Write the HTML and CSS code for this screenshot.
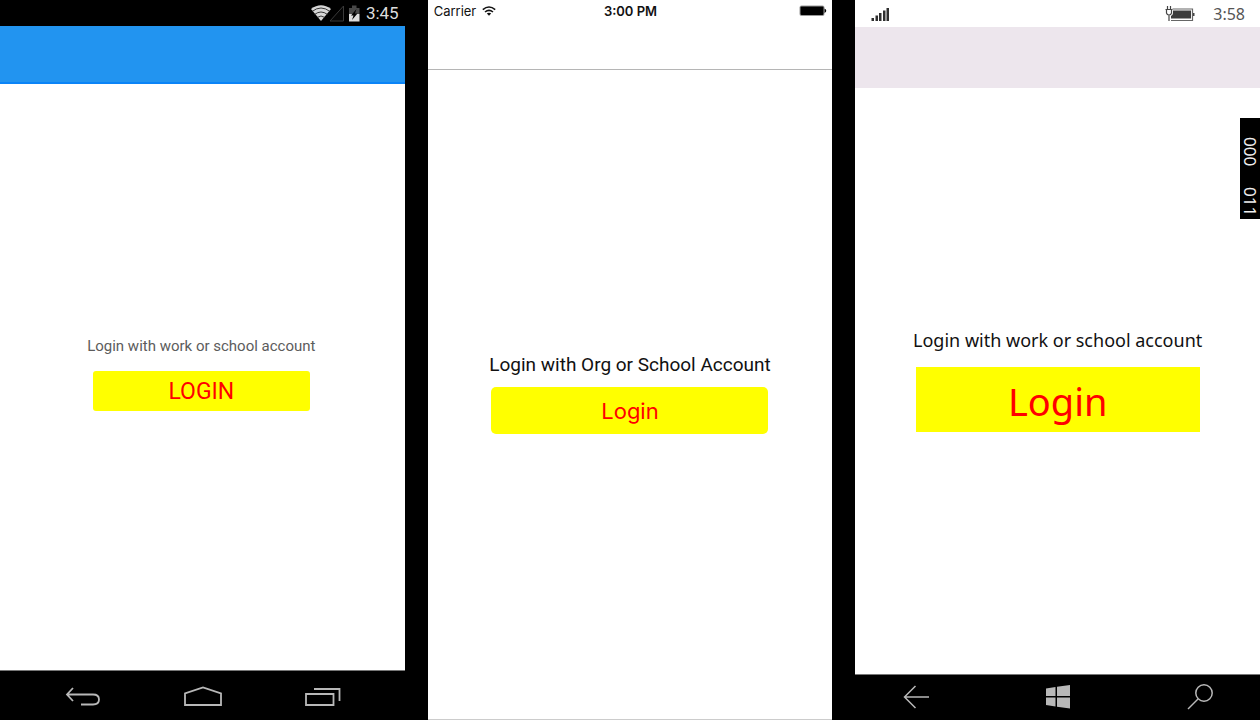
FILE: index.html
```html
<!DOCTYPE html>
<html lang="en">
<head>
<meta charset="utf-8">
<meta name="viewport" content="width=device-width, initial-scale=1">
<title>Login on three platforms</title>
<link rel="stylesheet" href="styles.css">
</head>
<body>
<main class="devices">
  <section class="device android" aria-label="Android">
    <div class="status">
      <svg class="status-icons" width="52" height="20" viewBox="0 0 52 20" aria-hidden="true">
        <path d="M1 6Q11-1.500 21 6L11 18Z" fill="#d6d6d6"/>
        <path d="M2 8.500Q11 1.500 20 8.500M4.500 11.500Q11 6.500 17.500 11.500M7 14.500Q11 11.500 15 14.500" fill="none" stroke="#222" stroke-width=".9"/>
        <path d="M20 18H33.500V3Z" fill="#050505" stroke="#3a3a3a"/>
        <path d="M39 5H42V2.500H46.500V5H49.500V11H39Z" fill="#484848"/>
        <path d="M39 11H49.500V18.500H39Z" fill="#dcdcdc"/>
        <path d="M46.500 6L41 12.500H43.500L42 17L47.500 10.500H45Z" fill="#000"/>
      </svg>
      <time>3:45</time>
    </div>
    <header class="bar"></header>
    <div class="content">
      <div class="login">
        <p class="label" id="android-label">Login with work or school account</p>
        <button class="button" type="button" aria-describedby="android-label">LOGIN</button>
      </div>
    </div>
    <nav class="nav" aria-label="Android navigation">
      <button class="nav-button" type="button" aria-label="Back">
        <svg width="36" height="22" viewBox="0 0 36 22"><path d="M8 2L2 8.500L8 15M2 8.500H28C32 8.500 34 10.500 34 13.500S32 18.500 28 18.500H16" fill="none" stroke="#b8b8b8" stroke-width="1.800"/></svg>
      </button>
      <button class="nav-button" type="button" aria-label="Home">
        <svg width="38" height="22" viewBox="0 0 38 22"><path d="M1 19V7.500L19 1.500L37 7.500V19Z" fill="none" stroke="#b8b8b8" stroke-width="1.800"/></svg>
      </button>
      <button class="nav-button" type="button" aria-label="Recent apps">
        <svg width="36" height="22" viewBox="0 0 36 22"><path d="M1 8H28.500V19H1ZM9 3H34.500V15" fill="none" stroke="#b8b8b8" stroke-width="1.800"/></svg>
      </button>
    </nav>
  </section>

  <section class="device ios" aria-label="iOS">
    <div class="status">
      <span class="carrier">Carrier
        <svg width="14" height="10" viewBox="0 0 14 10" aria-hidden="true"><path d="M.8 3.600Q7-1.600 13.200 3.600M3 6Q7 2.800 11 6" fill="none" stroke="#111" stroke-width="1.600"/><path d="M4.800 7.500Q7 5.800 9.200 7.500L7 9.800Z" fill="#111"/></svg>
      </span>
      <time>3:00 PM</time>
      <svg class="battery" width="28" height="12" viewBox="0 0 28 12" aria-hidden="true"><rect x=".5" y=".5" width="25" height="10.500" rx="2" fill="#999"/><rect x="1.500" y="1.500" width="23" height="8.500" rx="1" fill="#000"/><path d="M25.500 3.500Q29 5.700 25.500 8Z" fill="#000"/></svg>
    </div>
    <header class="bar"></header>
    <div class="content">
      <div class="login">
        <p class="label" id="ios-label">Login with Org or School Account</p>
        <button class="button" type="button" aria-describedby="ios-label">Login</button>
      </div>
    </div>
  </section>

  <section class="device windows" aria-label="Windows">
    <div class="status">
      <svg class="signal" width="20" height="16" viewBox="0 0 20 16" aria-hidden="true"><path d="M1.500 12H4V15H1.500ZM5.500 9.500H8V15H5.500ZM9 7H11.500V15H9ZM13 4.500H15.500V15H13ZM16.500 2H19V15H16.500Z" fill="#2f2f2f"/></svg>
      <svg class="battery" width="30" height="18" viewBox="0 0 30 18" aria-hidden="true"><path d="M7.500 4H27.500V15.500H6" fill="none" stroke="#666" stroke-width="1.200"/><path d="M8 5.500H26V13.500H6V11Q8 10 8 8Z" fill="#3d3d3d"/><path d="M28 8H29.500V11H28Z" fill="#444"/><path d="M2.500 1V4M5.500 1V4M.5 4.500H7.500M1.500 5V8Q2 10 4 10T6.500 8V5M4 10V16" fill="none" stroke="#444" stroke-width="1.200"/></svg>
      <time>3:58</time>
    </div>
    <header class="bar"></header>
    <div class="content">
      <div class="login">
        <p class="label" id="windows-label">Login with work or school account</p>
        <button class="button" type="button" aria-describedby="windows-label">Login</button>
      </div>
    </div>
    <nav class="nav" aria-label="Windows navigation">
      <button class="nav-button" type="button" aria-label="Back">
        <svg width="26" height="26" viewBox="0 0 26 26"><path d="M12.500 2L1.500 13L12.500 24M1.500 13H26" fill="none" stroke="#b8b8b8" stroke-width="1.500"/></svg>
      </button>
      <button class="nav-button" type="button" aria-label="Start">
        <svg width="26" height="26" viewBox="0 0 26 26"><path d="M1 4.500L10.500 3V12H1ZM12 2.800L25 1V12H12ZM1 13.500H10.500V22.500L1 21ZM12 13.500H25V24.500L12 22.700Z" fill="#b8b8b8"/></svg>
      </button>
      <button class="nav-button" type="button" aria-label="Search">
        <svg width="26" height="26" viewBox="0 0 26 26"><circle cx="17" cy="9" r="8.200" fill="none" stroke="#b8b8b8" stroke-width="1.500"/><path d="M11 15L1 25" stroke="#b8b8b8" stroke-width="1.500"/></svg>
      </button>
    </nav>
    <aside class="counter" aria-label="Frame counters"><span>000</span><span>011</span></aside>
  </section>
</main>
</body>
</html>
```

FILE: styles.css
```css
* {
  box-sizing: border-box;
}

body {
  margin: 0;
  background: #000;
}

.devices {
  display: grid;
  grid-template-columns: repeat(3, 1fr);
  gap: 23px;
  min-height: 100vh;
}

.device {
  display: flex;
  flex-direction: column;
  min-width: 0;
  background: #fff;
}

.status {
  display: flex;
  align-items: center;
}

.content {
  flex: 1;
  display: grid;
  place-items: center;
}

.login {
  display: flex;
  flex-direction: column;
  align-items: center;
}

.label {
  margin: 0;
  white-space: nowrap;
}

.button {
  padding: 0;
  border: 0;
  background: #ff0;
  color: #f00;
  font-family: inherit;
}

.nav {
  display: flex;
  align-items: center;
  justify-content: space-between;
  background: #000;
  border-top: 1px solid #777;
}

.nav-button {
  display: flex;
  padding: 0;
  border: 0;
  background: none;
}

.android {
  font-family: Roboto, sans-serif;
}

.android .status {
  justify-content: flex-end;
  gap: 4px;
  height: 26px;
  padding-right: 6px;
  background: #000;
  color: #ddd;
  font-size: 17px;
  line-height: 26px;
}

.android .bar {
  height: 58px;
  background: #2294f0;
  border-bottom: 2px solid #0b84f7;
}

.android .login {
  gap: 15px;
  padding: 0 2px 8px 0;
}

.android .label {
  color: #5c5c5c;
  font-size: 15px;
  line-height: 20px;
}

.android .button {
  width: 217px;
  height: 40px;
  padding-top: 2px;
  border-radius: 3px;
  font-size: 23px;
}

.android .nav {
  height: 50px;
  padding: 2px 64px 0 65px;
}

.ios {
  border-bottom: 1px solid #ccc;
  font-family: Inter, sans-serif;
}

.ios .status {
  display: grid;
  grid-template-columns: 1fr auto 1fr;
  height: 22px;
  padding: 0 5px 0 6px;
  color: #111;
  font-size: 13px;
}

.ios .carrier {
  display: flex;
  align-items: center;
  gap: 6px;
}

.ios .status time {
  font-weight: 600;
}

.ios .battery {
  justify-self: end;
}

.ios .bar {
  height: 48px;
  border-bottom: 1px solid #b5b5b5;
}

.ios .login {
  gap: 10px;
  padding-bottom: 2px;
}

.ios .label {
  color: #111;
  font-family: Roboto, sans-serif;
  font-size: 19px;
  line-height: 24px;
}

.ios .button {
  width: 277px;
  height: 47px;
  border-radius: 5px;
  font-size: 22px;
}

.windows {
  position: relative;
  font-family: "Noto Sans", sans-serif;
}

.windows .status {
  height: 27px;
  padding: 0 15px;
  color: #555;
  font-size: 16px;
}

.windows .battery {
  margin: 0 18px 0 auto;
}

.windows .bar {
  height: 61px;
  background: #ede6ed;
}

.windows .login {
  gap: 13px;
  padding-bottom: 3px;
}

.windows .label {
  color: #111;
  font-size: 18px;
  line-height: 27px;
}

.windows .button {
  width: 284px;
  height: 65px;
  padding-top: 3px;
  font-size: 38px;
}

.windows .nav {
  height: 46px;
  padding: 0 47px 2px 48px;
}

.counter {
  position: absolute;
  top: 118px;
  right: 0;
  display: flex;
  gap: 21px;
  width: 20px;
  height: 101px;
  padding-top: 19px;
  background: #000;
  color: #eee;
  font-size: 17px;
  line-height: 20px;
  writing-mode: vertical-rl;
}
```
